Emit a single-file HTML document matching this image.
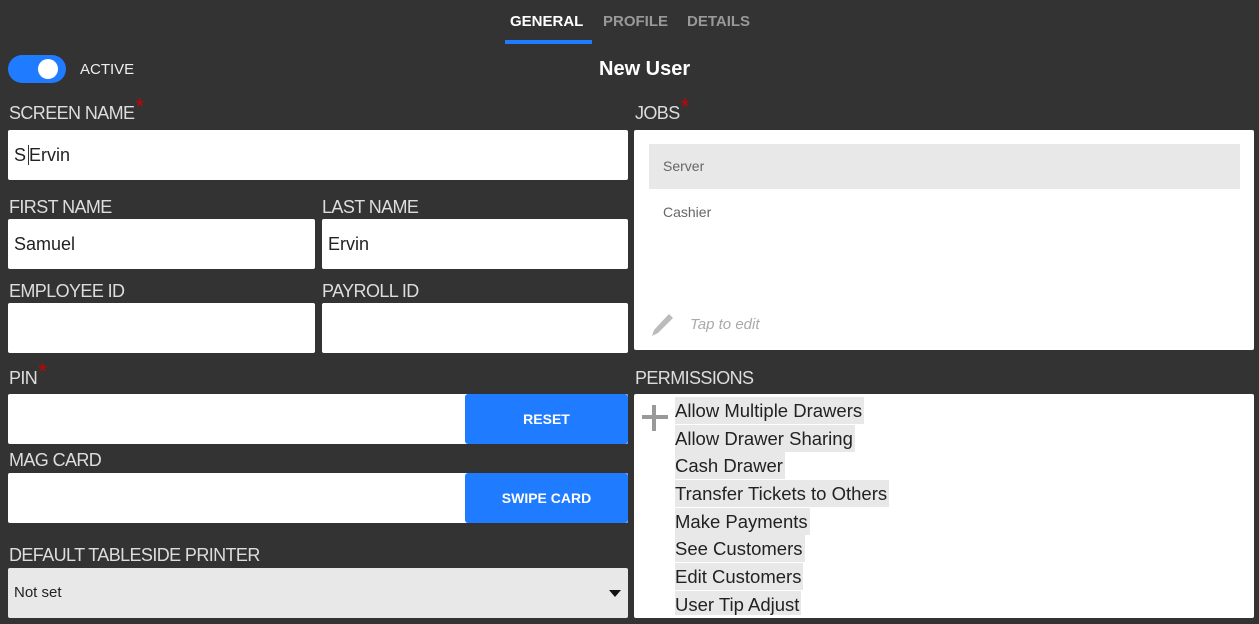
<html><head><style>
body{margin:0;width:1259px;height:624px;background:#333;font-family:"Liberation Sans",sans-serif;position:relative;overflow:hidden}
.a{position:absolute}
.lbl{position:absolute;color:#ddd;font-size:18px;letter-spacing:-0.6px}
.lbl sup{color:#c00;font-size:22px;position:relative;top:2px;margin-left:1px;line-height:0}
.in{position:absolute;background:#fff;border-radius:2px;font-size:18px;color:#222;box-sizing:border-box;padding-left:6px}
.btn{position:absolute;background:#1f7bff;color:#fff;font-weight:bold;font-size:14px;text-align:center;border-radius:3px}
.perm{position:absolute;left:675px;background:#e8e8e8;color:#222;font-size:18.5px;height:27px;line-height:27px;padding-right:2px}
</style></head><body>
<div class="a" style="left:510px;top:13px;color:#fff;font-weight:bold;font-size:15px">GENERAL</div>
<div class="a" style="left:603px;top:13px;color:#999;font-weight:bold;font-size:15px">PROFILE</div>
<div class="a" style="left:687px;top:13px;color:#999;font-weight:bold;font-size:15px">DETAILS</div>
<div class="a" style="left:505px;top:40px;width:87px;height:4px;background:#1f7bff"></div>
<div class="a" style="left:8px;top:55px;width:58px;height:28px;border-radius:14px;background:#1f7bff"></div>
<div class="a" style="left:38px;top:59px;width:20px;height:20px;border-radius:10px;background:#fff"></div>
<div class="a" style="left:80px;top:61px;color:#eee;font-size:15px">ACTIVE</div>
<div class="a" style="left:599px;top:58px;color:#fff;font-weight:bold;font-size:20px">New User</div>
<div class="lbl" style="left:9px;top:103px">SCREEN NAME<sup>*</sup></div>
<div class="lbl" style="left:635px;top:103px">JOBS<sup>*</sup></div>
<div class="in" style="left:8px;top:130px;width:620px;height:50px;line-height:50px">S<span style="border-left:1px solid #333;margin-left:2px"></span>Ervin</div>
<div class="lbl" style="left:9px;top:197px">FIRST NAME</div>
<div class="lbl" style="left:322px;top:197px">LAST NAME</div>
<div class="in" style="left:8px;top:219px;width:307px;height:50px;line-height:50px">Samuel</div>
<div class="in" style="left:322px;top:219px;width:306px;height:50px;line-height:50px">Ervin</div>
<div class="lbl" style="left:9px;top:281px">EMPLOYEE ID</div>
<div class="lbl" style="left:322px;top:281px">PAYROLL ID</div>
<div class="in" style="left:8px;top:303px;width:307px;height:50px"></div>
<div class="in" style="left:322px;top:303px;width:306px;height:50px"></div>
<div class="lbl" style="left:9px;top:368px">PIN<sup>*</sup></div>
<div class="in" style="left:8px;top:394px;width:620px;height:50px"></div>
<div class="btn" style="left:465px;top:394px;width:163px;height:50px;line-height:50px">RESET</div>
<div class="lbl" style="left:9px;top:450px">MAG CARD</div>
<div class="in" style="left:8px;top:473px;width:620px;height:50px"></div>
<div class="btn" style="left:465px;top:473px;width:163px;height:50px;line-height:50px">SWIPE CARD</div>
<div class="lbl" style="left:9px;top:545px">DEFAULT TABLESIDE PRINTER</div>
<div class="in" style="left:8px;top:568px;width:620px;height:50px;line-height:50px;background:#e8e8e8;font-size:15px">Not set</div>
<div class="a" style="left:609px;top:590px;width:0;height:0;border-left:6px solid transparent;border-right:6px solid transparent;border-top:7px solid #111"></div>
<div class="a" style="left:634px;top:130px;width:620px;height:220px;background:#fff;border-radius:2px"></div>
<div class="a" style="left:649px;top:144px;width:591px;height:45px;background:#e8e8e8"></div>
<div class="a" style="left:663px;top:158px;color:#666;font-size:14px">Server</div>
<div class="a" style="left:663px;top:204px;color:#666;font-size:14px">Cashier</div>
<svg class="a" style="left:648px;top:311px" width="28" height="28" viewBox="0 0 28 28"><path d="M21 3l4 4L10 22l-6 3 2-6z" fill="#bbb"/></svg>
<div class="a" style="left:690px;top:316px;color:#aaa;font-size:15px;font-style:italic">Tap to edit</div>
<div class="lbl" style="left:635px;top:368px">PERMISSIONS</div>
<div class="a" style="left:634px;top:394px;width:620px;height:224px;background:#fff;border-radius:2px"></div>
<svg class="a" style="left:640px;top:403px" width="28" height="30"><path d="M14 2v26M2 14h26" stroke="#999" stroke-width="4"/></svg>
<div class="perm" style="top:397px">Allow Multiple Drawers</div>
<div class="perm" style="top:425px">Allow Drawer Sharing</div>
<div class="perm" style="top:452px">Cash Drawer</div>
<div class="perm" style="top:480px">Transfer Tickets to Others</div>
<div class="perm" style="top:508px">Make Payments</div>
<div class="perm" style="top:535px">See Customers</div>
<div class="perm" style="top:563px">Edit Customers</div>
<div class="perm" style="top:591px;height:24px">User Tip Adjust</div>
</body></html>
